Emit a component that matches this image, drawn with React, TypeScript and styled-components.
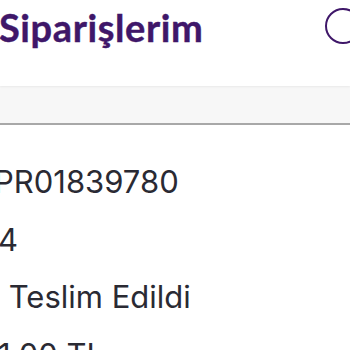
import React from "react";
import styled, { createGlobalStyle } from "styled-components";

const Global = createGlobalStyle`
  html, body { margin: 0; padding: 0; background: #ffffff; overflow: hidden; }
  body { font-family: "Inter", "Lato", sans-serif; }
`;

const Page = styled.div`
  width: 350px;
  height: 350px;
  overflow: hidden;
  display: flex;
  flex-direction: column;
  background: #ffffff;
`;

const Header = styled.header`
  height: 86px;
  flex-shrink: 0;
  display: flex;
  align-items: flex-start;
  justify-content: space-between;
  box-sizing: border-box;
  padding-top: 5px;
  background: #ffffff;
  box-shadow: 0 1px 2px rgba(0, 0, 0, 0.06);
  position: relative;
  z-index: 1;
`;

const Title = styled.h1`
  margin: 0 0 0 -1px;
  font-family: "Lato", "Inter", sans-serif;
  font-weight: 700;
  font-size: 38px;
  line-height: 44px;
  color: #3f1769;
  letter-spacing: 0.6px;
  -webkit-text-stroke: 0.4px #3f1769;
`;

const IconButton = styled.div`
  width: 36px;
  height: 36px;
  margin-top: 3px;
  margin-right: -11px;
  border: 2.5px solid #3f1769;
  border-radius: 50%;
  box-sizing: border-box;
  flex-shrink: 0;
`;

const FilterBar = styled.div`
  height: 37px;
  flex-shrink: 0;
  background: #f7f7f7;
  border-bottom: 2px solid #a8a8a8;
`;

const Details = styled.div`
  display: flex;
  flex-direction: column;
  padding-top: 28px;
  flex-shrink: 0;
`;

const Line = styled.div<{ $shift: number }>`
  font-family: "Inter", sans-serif;
  font-size: 31px;
  line-height: 57.5px;
  color: #2a2a33;
  white-space: nowrap;
  margin-left: ${(p) => p.$shift}px;
`;

export default function App() {
  return (
    <>
      <Global />
      <Page>
        <Header>
          <Title>Siparişlerim</Title>
          <IconButton />
        </Header>
        <FilterBar />
        <Details>
          <Line $shift={-6}>PR01839780</Line>
          <Line $shift={-2}>4</Line>
          <Line $shift={0}>&nbsp;Teslim Edildi</Line>
          <Line $shift={-2}>1.00 TL</Line>
        </Details>
      </Page>
    </>
  );
}
